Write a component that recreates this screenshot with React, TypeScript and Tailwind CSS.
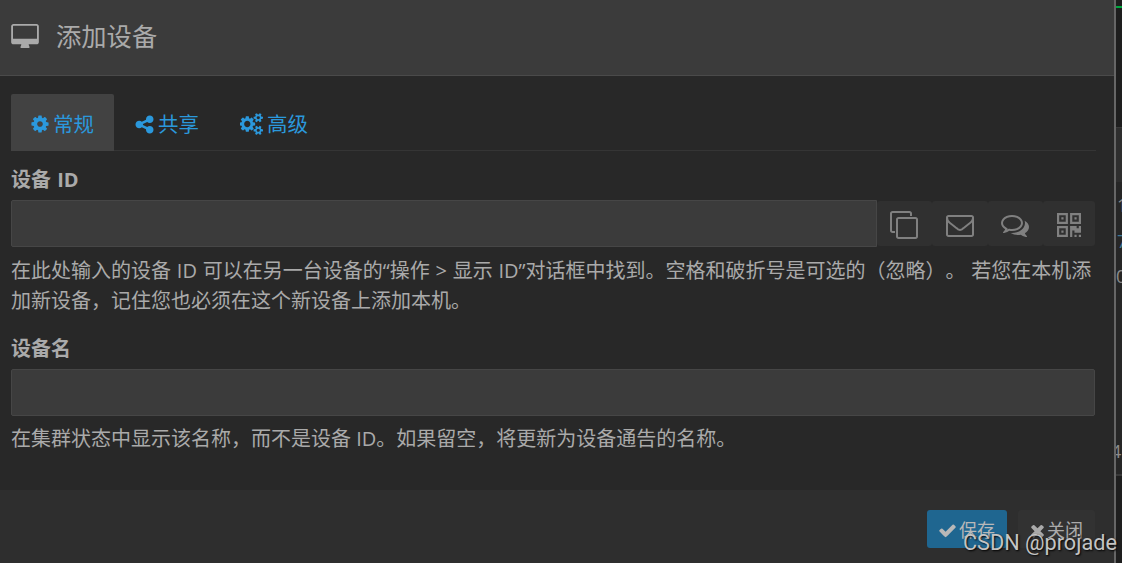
import type { ReactNode } from 'react';

interface IconProps {
  d: string;
  viewBox?: string;
  className?: string;
}

const Icon = ({ d, viewBox = '0 0 1792 1792', className = '' }: IconProps) => (
  <svg viewBox={viewBox} className={`shrink-0 fill-current ${className}`} aria-hidden="true">
    <path d={d} />
  </svg>
);

const icons = {
  desktop:
    'M1728 992v-832q0-13-9.5-22.5t-22.5-9.5h-1600q-13 0-22.5 9.5t-9.5 22.5v832q0 13 9.5 22.5t22.5 9.5h1600q13 0 22.5-9.5t9.5-22.5zm128-832v1088q0 66-47 113t-113 47h-544q0 37 16 77.5t32 71 16 43.5q0 26-19 45t-45 19h-512q-26 0-45-19t-19-45q0-14 16-44t32-70 16-78h-544q-66 0-113-47t-47-113v-1088q0-66 47-113t113-47h1600q66 0 113 47t47 113z',
  cog: 'M1152 896q0-106-75-181t-181-75-181 75-75 181 75 181 181 75 181-75 75-181zm512-109v222q0 12-8 23t-20 13l-185 28q-19 54-39 91 35 50 107 138 10 12 10 25t-9 23q-27 37-99 108t-94 71q-12 0-26-9l-138-108q-44 23-91 38-16 136-29 186-7 28-36 28h-222q-14 0-24.5-8.5t-11.5-21.5l-28-184q-49-16-90-37l-141 107q-10 9-25 9-14 0-25-11-126-114-165-168-7-10-7-23 0-12 8-23 15-21 51-66.5t54-70.5q-27-50-41-99l-183-27q-13-2-21-12.5t-8-23.5v-222q0-12 8-23t19-13l186-28q14-46 39-92-40-57-107-138-10-12-10-24 0-10 9-23 26-36 98.5-107.5t94.5-71.5q13 0 26 10l138 107q44-23 91-38 16-136 29-186 7-28 36-28h222q14 0 24.5 8.5t11.5 21.5l28 184q49 16 90 37l142-107q9-9 24-9 13 0 25 10 129 119 165 170 7 8 7 22 0 12-8 23-15 21-51 66.5t-54 70.5q26 50 41 98l183 28q13 2 21 12.5t8 23.5z',
  share:
    'M1344 1024q133 0 226.5 93.5t93.5 226.5-93.5 226.5-226.5 93.5-226.5-93.5-93.5-226.5q0-12 2-34l-360-180q-92 86-218 86-133 0-226.5-93.5t-93.5-226.5 93.5-226.5 226.5-93.5q126 0 218 86l360-180q-2-22-2-34 0-133 93.5-226.5t226.5-93.5 226.5 93.5 93.5 226.5-93.5 226.5-226.5 93.5q-126 0-218-86l-360 180q2 22 2 34t-2 34l360 180q92-86 218-86z',
  cogs: 'M832 896q0-106-75-181t-181-75-181 75-75 181 75 181 181 75 181-75 75-181zm768 512q0-52-38-90t-90-38-90 38-38 90q0 53 37.5 90.5t90.5 37.5 90.5-37.5 37.5-90.5zm0-1024q0-52-38-90t-90-38-90 38-38 90q0 53 37.5 90.5t90.5 37.5 90.5-37.5 37.5-90.5zm-384 421v185q0 10-7 19.5t-16 10.5l-155 24q-11 35-32 76 34 48 90 115 7 11 7 20 0 12-7 19-23 30-82.5 89.5t-78.5 59.5q-11 0-21-7l-115-90q-37 19-77 31-11 108-23 155-7 24-30 24h-186q-11 0-20-7.5t-10-17.5l-23-153q-34-10-75-31l-118 89q-7 7-20 7-11 0-21-8-144-133-144-160 0-9 7-19 10-14 41-53t47-61q-23-44-35-82l-152-24q-10-1-17-9.5t-7-19.5v-185q0-10 7-19.5t16-10.5l155-24q11-35 32-76-34-48-90-115-7-11-7-20 0-12 7-20 22-30 82-89t79-59q11 0 21 7l115 90q34-18 77-32 11-108 23-154 7-24 30-24h186q11 0 20 7.5t10 17.5l23 153q34 10 75 31l118-89q8-7 20-7 11 0 21 8 144 133 144 160 0 8-7 19-12 16-42 54t-45 60q23 48 34 82l152 23q10 2 17 10.5t7 19.5zm640 533v140q0 16-149 31-12 27-30 52 51 113 51 138 0 4-4 7-122 71-124 71-8 0-46-47t-52-68q-20 2-30 2t-30-2q-14 21-52 68t-46 47q-2 0-124-71-4-3-4-7 0-25 51-138-18-25-30-52-149-15-149-31v-140q0-16 149-31 13-29 30-52-51-113-51-138 0-4 4-7 4-2 35-20t59-34 30-16q8 0 46 46.5t52 67.5q20-2 30-2t30 2q51-71 92-112l6-2q4 0 124 70 4 3 4 7 0 25-51 138 17 23 30 52 149 15 149 31zm0-1024v140q0 16-149 31-12 27-30 52 51 113 51 138 0 4-4 7-122 71-124 71-8 0-46-47t-52-68q-20 2-30 2t-30-2q-14 21-52 68t-46 47q-2 0-124-71-4-3-4-7 0-25 51-138-18-25-30-52-149-15-149-31v-140q0-16 149-31 13-29 30-52-51-113-51-138 0-4 4-7 4-2 35-20t59-34 30-16q8 0 46 46.5t52 67.5q20-2 30-2t30 2q51-71 92-112l6-2q4 0 124 70 4 3 4 7 0 25-51 138 17 23 30 52 149 15 149 31z',
  clone:
    'M1664 1632v-1088q0-13-9.5-22.5t-22.5-9.5h-1088q-13 0-22.5 9.5t-9.5 22.5v1088q0 13 9.5 22.5t22.5 9.5h1088q13 0 22.5-9.5t9.5-22.5zm128-1088v1088q0 66-47 113t-113 47h-1088q-66 0-113-47t-47-113v-1088q0-66 47-113t113-47h1088q66 0 113 47t47 113zm-384-384v160h-128v-160q0-13-9.5-22.5t-22.5-9.5h-1088q-13 0-22.5 9.5t-9.5 22.5v1088q0 13 9.5 22.5t22.5 9.5h160v128h-160q-66 0-113-47t-47-113v-1088q0-66 47-113t113-47h1088q66 0 113 47t47 113z',
  envelope:
    'M1664 1504v-768q-32 36-69 66-268 206-426 338-51 43-83 67t-86.5 48.5-102.5 24.5h-2q-48 0-102.5-24.5t-86.5-48.5-83-67q-158-132-426-338-37-30-69-66v768q0 13 9.5 22.5t22.5 9.5h1472q13 0 22.5-9.5t9.5-22.5zm0-1051v-24.5l-.5-13-3-12.5-5.5-9-9-7.5-14-2.5h-1472q-13 0-22.5 9.5t-9.5 22.5q0 168 147 284 193 152 401 317 6 5 35 29.5t46 37.5 44.5 31.5 50.5 27.5 43 9h2q20 0 43-9t50.5-27.5 44.5-31.5 46-37.5 35-29.5q208-165 401-317 54-43 100.5-115.5t46.5-131.5zm128-37v1088q0 66-47 113t-113 47h-1472q-66 0-113-47t-47-113v-1088q0-66 47-113t113-47h1472q66 0 113 47t47 113z',
  comments:
    'M704 384q-153 0-286 52t-211.5 141-78.5 191q0 82 53 158t149 132l97 56-35 84q34-20 62-39l44-31 53 10q78 14 153 14 153 0 286-52t211.5-141 78.5-191-78.5-191-211.5-141-286-52zm0-128q191 0 353.5 68.5t256.5 186.5 94 257-94 257-256.5 186.5-353.5 68.5q-86 0-176-16-124 88-278 128-36 9-86 16h-3q-11 0-20.5-8t-11.5-21q-1-3-1-6.5t.5-6.5 2-6l2.5-5 3.5-5.5 4-5 4.5-5 4-4.5q5-6 23-25t26-29.5 22.5-29 25-38.5 20.5-44q-124-72-195-177t-71-224q0-139 94-257t256.5-186.5 353.5-68.5zm822 1169q10 24 20.5 44t25 38.5 22.5 29 26 29.5 23 25q1 1 4 4.5t4.5 5 4 5 3.5 5.5l2.5 5 2 6 .5 6.5-1 6.5q-3 14-13 22t-22 7q-50-7-86-16-154-40-278-128-90 16-176 16-271 0-472-132 58 4 88 4 161 0 309-45t264-129q125-92 192-212t67-254q0-77-23-152 129 71 204 178t75 230q0 120-71 224.5t-195 176.5z',
  qrcode:
    'M576 1152v128h-128v-128h128zm0-768v128h-128v-128h128zm768 0v128h-128v-128h128zm-1024 1023h384v-383h-384v383zm0-767h384v-384h-384v384zm768 0h384v-384h-384v384zm-256 256v640h-640v-640h640zm512 512v128h-128v-128h128zm256 0v128h-128v-128h128zm0-512v384h-384v-128h-128v384h-128v-640h384v128h128v-128h128zm-768-768v640h-640v-640h640zm768 0v640h-640v-640h640z',
  check:
    'M1671 566q0 40-28 68l-724 724-136 136q-28 28-68 28t-68-28l-136-136-362-362q-28-28-28-68t28-68l136-136q28-28 68-28t68 28l294 295 656-657q28-28 68-28t68 28l136 136q28 28 28 68z',
  times:
    'M1490 1322q0 40-28 68l-136 136q-28 28-68 28t-68-28l-294-294-294 294q-28 28-68 28t-68-28l-136-136q-28-28-28-68t28-68l294-294-294-294q-28-28-28-68t28-68l136-136q28-28 68-28t68 28l294 294 294-294q28-28 68-28t68 28l136 136q28 28 28 68t-28 68l-294 294 294 294q28 28 28 68z',
};

const Tab = ({ active = false, children }: { active?: boolean; children: ReactNode }) => (
  <button
    className={`flex h-[57px] items-center gap-[3px] rounded-t-[2px] pt-[3px] text-[20.5px] text-[#2b98dc] ${
      active ? 'w-[103px] bg-[#424242] pl-[19px]' : 'pl-[20px]'
    }`}
  >
    {children}
  </button>
);

const IconButton = ({ className = '', children }: { className?: string; children: ReactNode }) => (
  <button className={`flex h-[45px] items-center rounded-[3px] bg-[#303030] pt-[2px] text-[#808080] ${className}`}>
    {children}
  </button>
);

const App = () => {
  return (
    <div className="relative flex h-[563px] w-[1122px] overflow-hidden bg-[#282828] font-['Open_Sans','Noto_Sans_CJK_SC',sans-serif] text-[20px] leading-[30px] text-[#aaaaaa] [text-spacing-trim:space-all]">
      <div className="flex w-[1114px] shrink-0 flex-col">
        <header className="flex h-[76px] items-center border-b border-[#4a4a4a] bg-[#3b3b3b] pb-[3px] pl-[11px]">
          <Icon d={icons.desktop} viewBox="-64 0 1920 1664" className="h-[24px] w-[28px]" />
          <h4 className="ml-[17px] text-[25.3px] leading-[30px]">添加设备</h4>
        </header>

        <main className="flex h-[414px] flex-col pl-[11px] pr-[19px] pt-[18px]">
          <nav className="flex h-[57px] w-[1085px] border-b border-[#353535]">
            <Tab active>
              <Icon d={icons.cog} className="size-[20px]" />
              常规
            </Tab>
            <Tab>
              <Icon d={icons.share} className="size-[21px]" />
              共享
            </Tab>
            <div className="w-[21px]" />
            <Tab>
              <Icon d={icons.cogs} viewBox="0 0 1920 1792" className="h-[22px] w-[24px]" />
              高级
            </Tab>
          </nav>

          <label className="mt-[14px] font-bold [word-spacing:1px]">设备 ID</label>
          <div className="mt-[5px] flex h-[47px] items-center">
            <input className="h-[47px] w-[866px] rounded-l-[2px] border border-[#464646] bg-[#3b3b3b] outline-none" />
            <IconButton className="w-[55px] pl-[13px]">
              <Icon d={icons.clone} className="size-[28px]" />
            </IconButton>
            <IconButton className="w-[56px] pl-[14px]">
              <Icon d={icons.envelope} className="size-[28px]" />
            </IconButton>
            <IconButton className="w-[55px] pl-[13px]">
              <Icon d={icons.comments} className="size-[28px]" />
            </IconButton>
            <IconButton className="w-[52px] pl-[14px]">
              <Icon d={icons.qrcode} viewBox="192 128 1408 1408" className="size-[24px]" />
            </IconButton>
          </div>
          <p className="mt-[9px] whitespace-nowrap [word-spacing:0.6px]">
            在此处输入的设备 ID 可以在另一台设备的“操作 &gt; 显示 ID”对话框中找到。空格和破折号是可选的（忽略）。 若您在本机添
            <br />
            加新设备，记住您也必须在这个新设备上添加本机。
          </p>

          <label className="mt-[18px] font-bold">设备名</label>
          <input className="mt-[5px] h-[47px] w-[1084px] shrink-0 rounded-[2px] border border-[#464646] bg-[#3b3b3b] outline-none" />
          <p className="mt-[8px] whitespace-nowrap">在集群状态中显示该名称，而不是设备 ID。如果留空，将更新为设备通告的名称。</p>
        </main>

        <footer className="flex flex-1 items-start gap-[11px] bg-[#2e2e2e] pl-[927px] pt-[20px]">
          <button className="flex h-[38px] w-[80px] items-center rounded-[3px] bg-[#1f6690] pl-[11px] pt-[2px] text-[18px] text-[#b8b8b8]">
            <Icon d={icons.check} className="mr-[2px] size-[19px]" />
            保存
          </button>
          <button className="flex h-[38px] w-[77px] items-center rounded-[3px] bg-[#323232] pl-[10px] pt-[2px] text-[18px]">
            <Icon d={icons.times} className="size-[19px]" />
            关闭
          </button>
        </footer>
      </div>

      <div className="w-[2px] shrink-0 bg-[#666666]" />

      {/* strip of the page behind the dialog */}
      <aside className="flex w-[6px] shrink-0 flex-col overflow-hidden bg-[#1e1e1e] text-[18px] leading-[36px] text-[#8b8b8b]">
        <div className="mt-[6px] h-[2px] shrink-0 bg-[#00a83f]" />
        <div className="mt-[119px] h-[55px] shrink-0 border-t border-[#393939] bg-[#2e2e2e]" />
        <div className="flex h-[292px] shrink-0 flex-col bg-[#262626] pt-[5px]">
          <span className="ml-[1px] h-[36px]">1</span>
          <span className="ml-[1px] h-[35px] text-[#3d7896]">7</span>
          <span className="h-[36px]">0</span>
          <span className="-ml-[5px] mt-[139px] h-[36px]">4</span>
        </div>
        <div className="h-[2px] shrink-0 bg-[#383838]" />
      </aside>

      <span className="absolute left-[963px] top-[528px] whitespace-nowrap font-['Roboto',sans-serif] text-[21.7px] leading-[30px] text-[#c4c4c4] [text-shadow:1px_1px_2px_#000]">
        CSDN @projade
      </span>
    </div>
  );
};

export default App;
